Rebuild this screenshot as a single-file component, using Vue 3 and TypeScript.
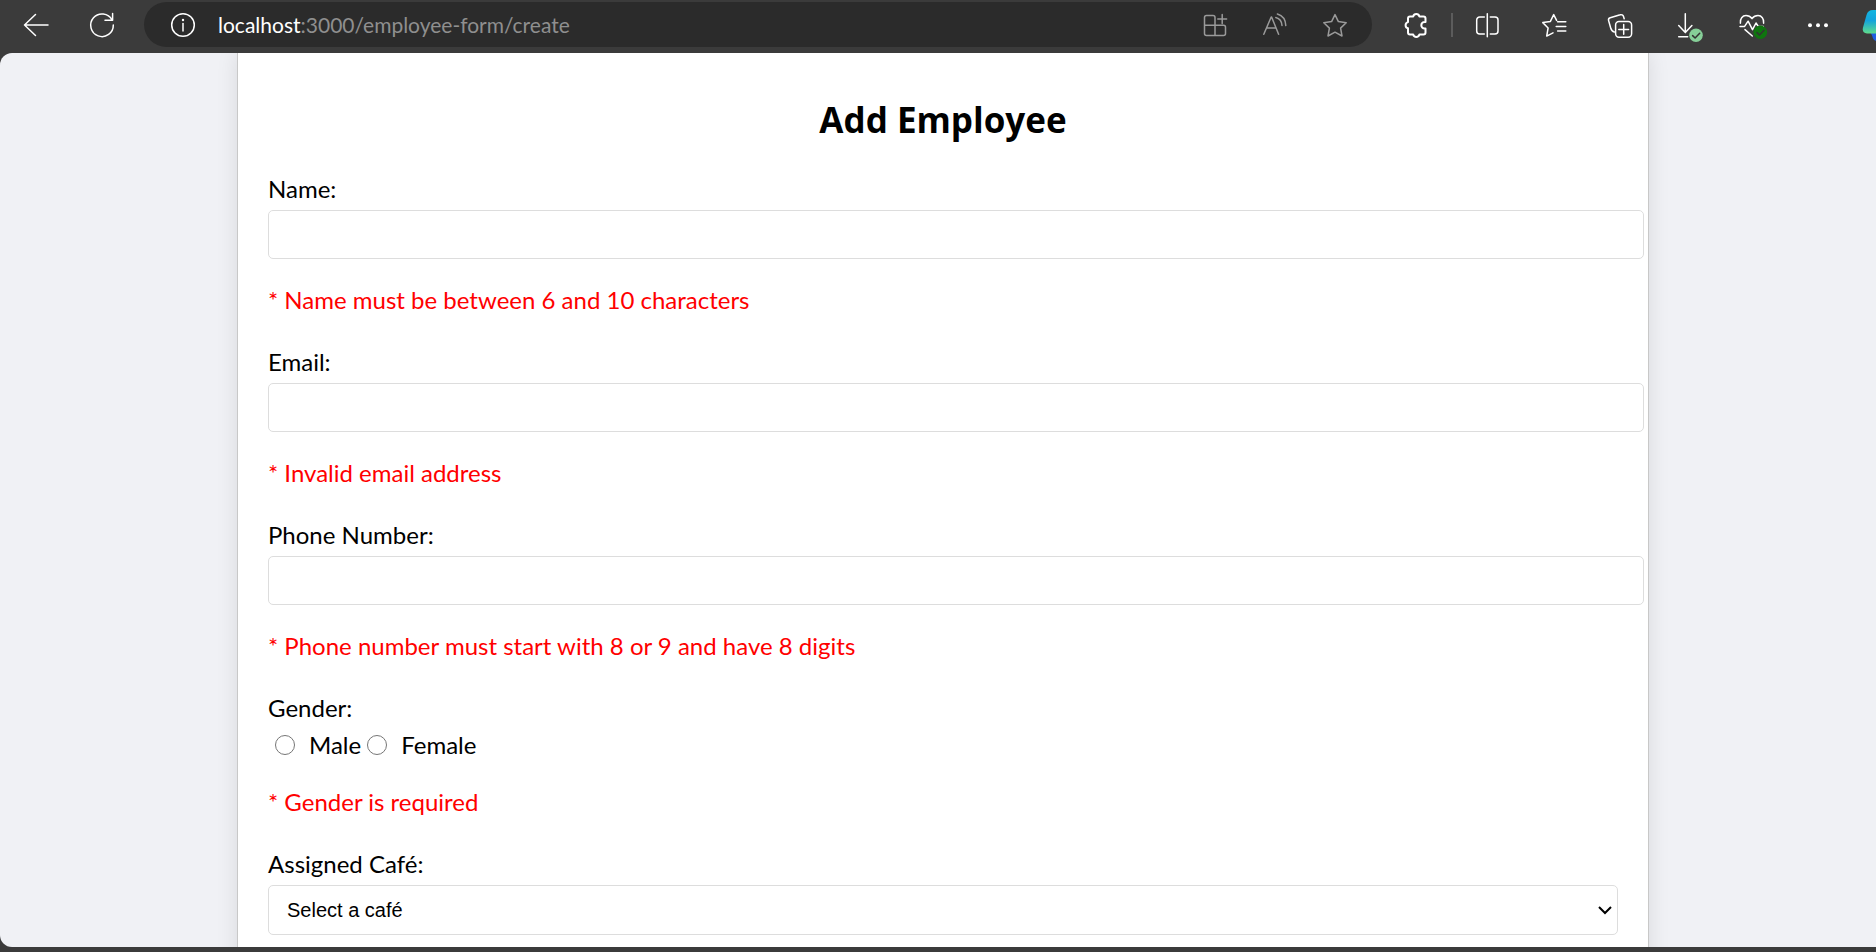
<script setup lang="ts">
import { reactive } from 'vue'

interface TextField {
  key: 'name' | 'email' | 'phone'
  label: string
  type: string
  error: string
}

const fields: TextField[] = [
  { key: 'name', label: 'Name:', type: 'text', error: '* Name must be between 6 and 10 characters' },
  { key: 'email', label: 'Email:', type: 'email', error: '* Invalid email address' },
  { key: 'phone', label: 'Phone Number:', type: 'tel', error: '* Phone number must start with 8 or 9 and have 8 digits' },
]

const genders: string[] = ['Male', 'Female']

const form = reactive({ name: '', email: '', phone: '', gender: '', cafe: '' })
</script>

<template>
  <div class="window">
    <header class="toolbar">
      <nav class="history">
        <button type="button" class="tool" aria-label="Back">
          <svg viewBox="0 0 28 28"><path d="M26 14H2.5M13.5 3.5 2.5 14l11 10.5" /></svg>
        </button>
        <button type="button" class="tool" aria-label="Refresh">
          <svg viewBox="0 0 28 28"><path d="M24.6 2.5v6.8H17M24 9A11.3 11.3 0 1 0 25.3 14" /></svg>
        </button>
      </nav>

      <div class="address">
        <button type="button" class="tool" aria-label="View site information">
          <svg viewBox="0 0 28 28"><circle cx="14" cy="14" r="11.3" /><path d="M14 12.5V20" /><circle class="solid" cx="14" cy="9" r="1.2" /></svg>
        </button>
        <span class="url"><span class="host">localhost</span>:3000/employee-form/create</span>
        <button type="button" class="tool dim" aria-label="App available">
          <svg viewBox="0 0 28 28"><path d="M14 24.5V6.5a2 2 0 0 0-2-2H5.5a2 2 0 0 0-2 2v16a2 2 0 0 0 2 2h17a2 2 0 0 0 2-2v-6.2a2 2 0 0 0-2-2h-19M21.2 3.5v9M16.8 8h8.8" /></svg>
        </button>
        <button type="button" class="tool dim" aria-label="Read aloud">
          <svg viewBox="0 0 28 28"><path d="M2.8 23.3 10.2 6h.4l7 17.3M5.5 17h9.6M14.8 6.5c3.8 1 6 4 6.2 8M16.4 3c5.4 1.6 8.2 6 8.4 11.6" /></svg>
        </button>
        <button type="button" class="tool dim" aria-label="Add to favorites">
          <svg viewBox="0 0 28 28"><path d="m14 3.6 3.4 7 7.8 1.1-5.6 5.4 1.4 7.9-7-3.8L7 25l1.4-7.9-5.6-5.4 7.8-1.1z" /></svg>
        </button>
      </div>

      <button type="button" class="tool" aria-label="Extensions">
        <svg class="bold" viewBox="0 0 28 28"><path d="M9 5.5h3.2a3.2 3.2 0 0 1 6.2 0h4.1a2 2 0 0 1 2 2V11h-1a3.2 3.2 0 0 0 0 6.4h1v4.1a2 2 0 0 1-2 2h-4.1a3.2 3.2 0 0 1-6.2 0H9a2 2 0 0 1-2-2v-4.2a3.2 3.2 0 0 1 0-6.2V7.5a2 2 0 0 1 2-2z" /></svg>
      </button>
      <span class="divider"></span>

      <div class="actions">
        <button type="button" class="tool" aria-label="Split screen">
          <svg viewBox="0 0 28 28"><path d="M14.3 2.7v23M11.3 6H6.7a3 3 0 0 0-3 3v11a3 3 0 0 0 3 3h4.6M17.3 6H22a3 3 0 0 1 3 3v11a3 3 0 0 1-3 3h-4.7" /></svg>
        </button>
        <button type="button" class="tool" aria-label="Favorites">
          <svg viewBox="0 0 28 28"><path d="m17.6 9.4-2.9-5.8-3.3 6.8-7.6 1.2 5.3 5.4-1.4 8.1 6.3-3.2M18.6 10.7h8.2M17.2 15.4h9.6M18.6 20h8.2" /></svg>
        </button>
        <button type="button" class="tool" aria-label="Collections">
          <svg viewBox="0 0 28 28"><path d="M9.3 21c-2.3-.6-3-2-3.6-4L3.6 9.6a2.3 2.3 0 0 1 1.6-2.8l10-3a2.6 2.6 0 0 1 3.3 1.7l.7 2.3M18.7 13.5v9.8M13.8 18.4h9.8" /><rect x="10.6" y="10.6" width="16" height="15.6" rx="3.4" /></svg>
        </button>
        <button type="button" class="tool" aria-label="Downloads">
          <svg viewBox="0 0 28 28"><path d="M14.3 2.7v18.8M7.7 14.6l6.6 7 6.6-7M7.7 25.7h9" /><circle class="badge-light" cx="25" cy="24.3" r="6.8" /><path class="check" d="m21.6 24.6 2.5 2.4 4.6-4.8" /></svg>
        </button>
        <button type="button" class="tool" aria-label="Browser essentials">
          <svg viewBox="0 0 28 28"><path d="M3.4 12.2C2.8 7.6 5.5 4.6 9 4.6c2.600 0 4.400 1 6 3 1.600-2 3.400-3 6-3 3.500 0 6.200 3 5.600 7.600M3 15.400h4.600l3.500-5.200 4.400 8.400 3.500-6.600 2.300 3.400h5M8 18.600l7.300 6.400" /><circle class="badge-dark" cx="23.3" cy="21.300" r="6.800" /><path class="check" d="m20 21.600 2.500 2.400 4.500-4.800" /></svg>
        </button>
        <button type="button" class="tool" aria-label="Settings and more">
          <svg viewBox="0 0 28 28"><g class="solid"><circle cx="7" cy="14.300" r="2" /><circle cx="15" cy="14.300" r="2" /><circle cx="23" cy="14.300" r="2" /></g></svg>
        </button>
      </div>

      <button type="button" class="tool copilot" aria-label="Copilot">
        <svg viewBox="0 0 28 28">
          <defs>
            <linearGradient id="copilot-sheen" x1="0" y1="0" x2="0" y2="1">
              <stop offset="0" stop-color="#12b5e0" />
              <stop offset="0.450" stop-color="#14a3dc" />
              <stop offset="1" stop-color="#5fdc8c" />
            </linearGradient>
          </defs>
          <path fill="#1f5fe0" stroke="none" d="M9 20h12v10h-5c-3 0-4-2-4.800-5z" />
          <path fill="url(#copilot-sheen)" stroke="none" d="M12-1h12v23.400H6c-3.500 0-4.800-2.400-4-6L5.500 4C6.500.500 8.500-1 12-1z" />
        </svg>
      </button>
    </header>

    <main class="viewport">
      <form class="card" novalidate @submit.prevent>
        <h1>Add Employee</h1>

        <div v-for="field in fields" :key="field.key" class="field">
          <label class="caption" :for="field.key">{{ field.label }}</label>
          <input :id="field.key" v-model="form[field.key]" class="text-box" :type="field.type" :aria-describedby="`${field.key}-error`" />
          <p :id="`${field.key}-error`" class="error">{{ field.error }}</p>
        </div>

        <div class="field" role="radiogroup" aria-labelledby="gender-caption">
          <span id="gender-caption" class="caption">Gender:</span>
          <div class="options">
            <label v-for="gender in genders" :key="gender" class="option">
              <input v-model="form.gender" type="radio" name="gender" :value="gender" />{{ gender }}
            </label>
          </div>
          <p class="error">* Gender is required</p>
        </div>

        <div class="field">
          <label class="caption" for="cafe">Assigned Café:</label>
          <div class="select-wrap">
            <select id="cafe" v-model="form.cafe">
              <option value="">Select a café</option>
            </select>
            <svg class="chevron" viewBox="0 0 14 10"><path d="m1 2 6 6 6-6" /></svg>
          </div>
        </div>
      </form>
    </main>
  </div>
</template>

<style>
body {
  margin: 0;
  background: #3b3b3b;
}
</style>

<style scoped>
.window {
  display: flex;
  flex-direction: column;
  height: 100vh;
  overflow: hidden;
  background: #3b3b3b;
  font-family: "Segoe UI", Lato, "Noto Sans", sans-serif;
  font-size: 24px;
  line-height: 32px;
  color: #000;
}

.toolbar {
  display: flex;
  flex: none;
  align-items: center;
  height: 53px;
  padding: 0 0 4px 22px;
  box-sizing: border-box;
}

.history,
.actions {
  display: flex;
  flex: none;
  gap: 38px;
}

.tool {
  flex: none;
  width: 28px;
  height: 28px;
  padding: 0;
  border: 0;
  background: none;
  color: #fff;
}

.tool svg {
  display: block;
  width: 28px;
  height: 28px;
  overflow: visible;
  fill: none;
  stroke: currentColor;
  stroke-width: 1.5;
  stroke-linecap: round;
  stroke-linejoin: round;
}

.tool svg.bold {
  stroke-width: 2;
}

.tool .solid {
  fill: currentColor;
  stroke: none;
}

.tool .badge-light {
  fill: #86cf98;
  stroke: none;
}

.tool .badge-dark {
  fill: #0f750f;
  stroke: none;
}

.tool .check {
  stroke: #333;
}

.dim {
  color: #9a9a9a;
}

.address {
  display: flex;
  flex: 1;
  align-items: center;
  gap: 32px;
  height: 45px;
  min-width: 0;
  margin: 0 29px 0 28px;
  padding: 0 23px 0 25px;
  box-sizing: border-box;
  border-radius: 23px;
  background: #2b2b2b;
}

.url {
  flex: 1;
  margin-left: -11px;
  overflow: hidden;
  white-space: nowrap;
  font-size: 21px;
  color: #8f8f8f;
}

.host {
  color: #fff;
}

.divider {
  flex: none;
  width: 2px;
  height: 24px;
  margin: 0 20px 0 22px;
  background: #5c5c5c;
}

.copilot {
  width: 15px;
  margin-left: 30px;
}

.viewport {
  flex: 1;
  min-height: 0;
  margin-bottom: 5px;
  padding: 0 227px 0 237px;
  overflow: hidden;
  border-radius: 12px 0 0 12px;
  background: #f0f1f5;
}

.card {
  min-height: 100%;
  padding: 43px 30px 60px;
  box-sizing: border-box;
  border: solid #c8c8c8;
  border-width: 0 1px;
  background: #fff;
  box-shadow: 0 0 20px rgba(0, 0, 0, 0.1);
}

h1 {
  margin: 0 0 29px;
  font-family: "Segoe UI", "Open Sans", sans-serif;
  font-size: 35px;
  line-height: 48px;
  font-weight: 700;
  text-align: center;
}

.field {
  margin-bottom: 30px;
}

.caption {
  display: block;
  margin-bottom: 5px;
}

.text-box {
  display: block;
  width: 100%;
  height: 23px;
  padding: 12px;
  box-sizing: content-box;
  border: 1px solid #ddd;
  border-radius: 5px;
  background: #fff;
  font: 20px "Liberation Sans", Arial, sans-serif;
}

.error {
  margin: 25px 0 0;
  color: #f00;
}

.options {
  display: flex;
  gap: 6px;
  padding-left: 7px;
}

.option {
  display: flex;
  align-items: center;
  gap: 14px;
}

.option input {
  width: 20px;
  height: 20px;
  margin: 0;
}

.select-wrap {
  position: relative;
}

select {
  display: block;
  width: 100%;
  height: 50px;
  padding: 0 40px 0 18px;
  appearance: none;
  border: 1px solid #ddd;
  border-radius: 5px;
  background: #fff;
  font: 20px "Liberation Sans", Arial, sans-serif;
  color: #000;
}

.chevron {
  position: absolute;
  top: 20px;
  right: 6px;
  width: 14px;
  height: 10px;
  fill: none;
  stroke: #000;
  stroke-width: 2;
  pointer-events: none;
}
</style>
